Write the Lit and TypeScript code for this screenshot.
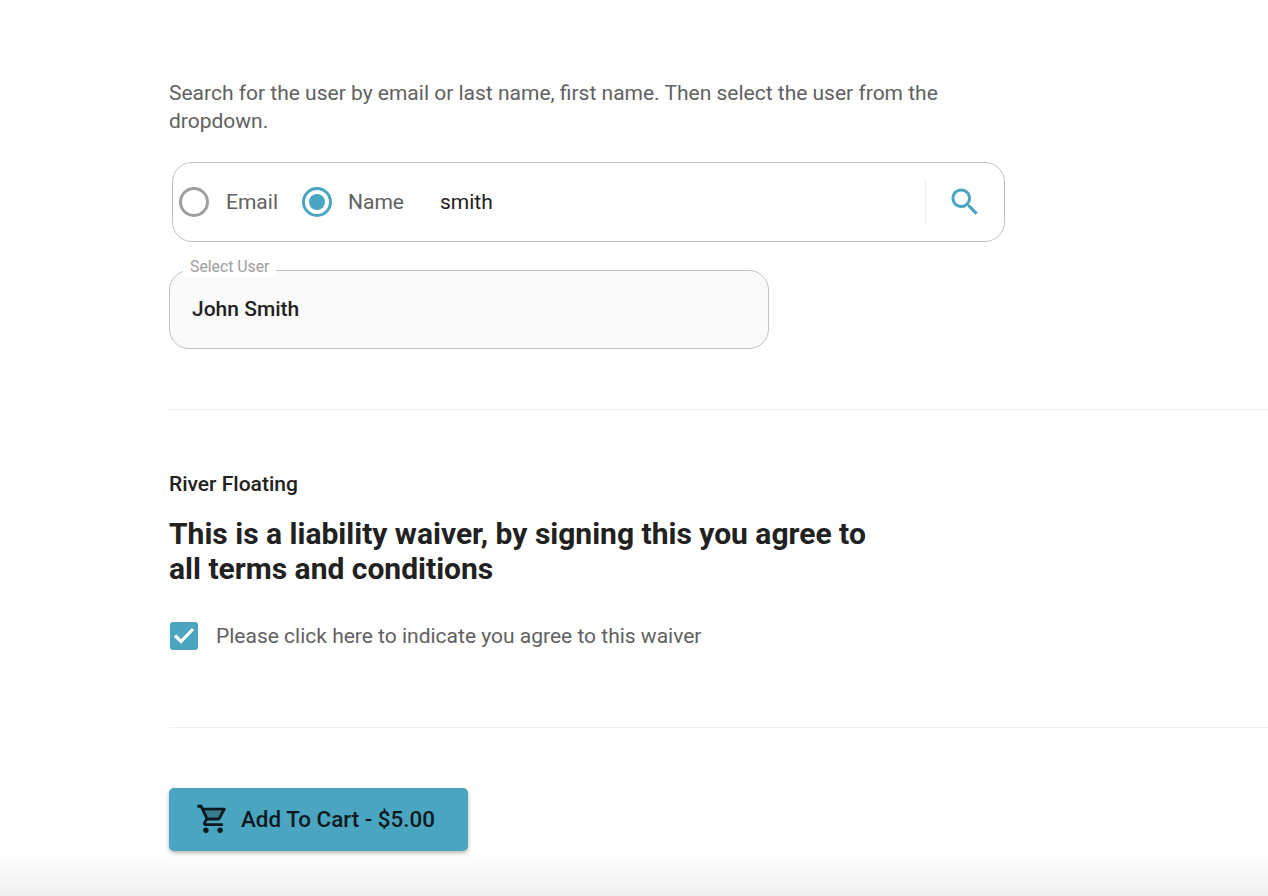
import { LitElement, html, css } from "lit";
import { customElement } from "lit/decorators.js";

@customElement("app-root")
export class AppRoot extends LitElement {
  static styles = css`
    :host {
      display: block;
      position: relative;
      height: 896px;
      overflow: hidden;
      background: #fff;
      font-family: Roboto, "Liberation Sans", sans-serif;
      color: #212121;
    }
    .page {
      display: flex;
      flex-direction: column;
      padding: 79px 0 0 169px;
      box-sizing: border-box;
    }
    .intro {
      margin: 0;
      width: 800px;
      font-size: 21px;
      line-height: 28px;
      color: #616161;
    }
    .search {
      display: flex;
      align-items: center;
      box-sizing: border-box;
      width: 833px;
      height: 80px;
      margin: 27px 0 0 3px;
      padding: 0 6px;
      border: 1px solid #c2c2c2;
      border-radius: 20px;
    }
    .radio {
      box-sizing: border-box;
      flex: none;
      width: 30px;
      height: 30px;
      border-radius: 50%;
      border: 3px solid #9e9e9e;
      display: flex;
      align-items: center;
      justify-content: center;
    }
    .radio.on {
      border-color: #4aa5c1;
    }
    .radio.on::after {
      content: "";
      width: 16px;
      height: 16px;
      border-radius: 50%;
      background: #4aa5c1;
    }
    .opt {
      font-size: 21px;
      color: #616161;
      margin-left: 16px;
    }
    .opt.first {
      margin-left: 17px;
      margin-right: 24px;
    }
    .query {
      flex: 1;
      margin-left: 36px;
      font-size: 21px;
      color: #212121;
    }
    .divider {
      width: 1px;
      height: 44px;
      background: #eeeeee;
    }
    .search-btn {
      display: flex;
      box-sizing: border-box;
      width: 72px;
      padding-left: 21px;
    }
    .search-btn svg {
      width: 36px;
      height: 36px;
      fill: #4aa5c1;
    }
    .select {
      position: relative;
      box-sizing: border-box;
      width: 600px;
      height: 79px;
      margin-top: 28px;
      padding: 0 0 2px 22px;
      display: flex;
      align-items: center;
      border: 1px solid #c2c2c2;
      border-radius: 20px;
      background: #fafafa;
      font-size: 21px;
      font-weight: 500;
      color: #212121;
    }
    .legend {
      position: absolute;
      left: 13px;
      top: -14px;
      padding: 0 7px;
      height: 20px;
      line-height: 20px;
      background: #fff;
      font-size: 15.8px;
      font-weight: 400;
      color: #9e9e9e;
    }
    .rule {
      height: 1px;
      background: #eeeeee;
    }
    .rule.a {
      margin-top: 60px;
    }
    .rule.b {
      margin-top: 77px;
    }
    .kicker {
      margin: 60px 0 0;
      font-size: 21px;
      line-height: 28px;
      font-weight: 500;
      color: #212121;
    }
    .title {
      margin: 18px 0 0;
      width: 720px;
      font-size: 30px;
      line-height: 35px;
      font-weight: 700;
      color: #212121;
    }
    .agree {
      display: flex;
      align-items: center;
      margin-top: 36px;
      font-size: 21px;
      color: #616161;
    }
    .box {
      box-sizing: border-box;
      flex: none;
      width: 28px;
      height: 28px;
      margin: 0 18px 0 1px;
      border-radius: 3px;
      background: #4aa5c1;
      display: flex;
      align-items: center;
      justify-content: center;
    }
    .box svg {
      width: 28px;
      height: 28px;
    }
    .cart {
      display: flex;
      align-items: center;
      box-sizing: border-box;
      width: 299px;
      height: 63px;
      margin-top: 60px;
      padding: 0 0 2px 27px;
      border-radius: 5px;
      background: #4aa5c1;
      box-shadow: 0 2px 4px rgba(0, 0, 0, 0.3);
      font-size: 22.4px;
      font-weight: 500;
      color: #0c1a20;
    }
    .cart svg {
      width: 34px;
      height: 34px;
      margin-right: 11px;
      fill: #0c1a20;
    }
    .fade {
      position: absolute;
      left: 0;
      right: 0;
      bottom: 0;
      height: 44px;
      background: linear-gradient(to bottom, rgba(240, 240, 240, 0), #f0f0f0);
      pointer-events: none;
    }
  `;

  render() {
    return html`
      <div class="page">
        <p class="intro">
          Search for the user by email or last name, first name. Then select the user from the dropdown.
        </p>
        <div class="search">
          <span class="radio"></span>
          <span class="opt first">Email</span>
          <span class="radio on"></span>
          <span class="opt">Name</span>
          <span class="query">smith</span>
          <span class="divider"></span>
          <span class="search-btn">
            <svg viewBox="0 0 24 24">
              <path
                d="M15.5 14h-.79l-.28-.27C15.41 12.59 16 11.11 16 9.5 16 5.91 13.09 3 9.5 3S3 5.91 3 9.5 5.91 16 9.5 16c1.61 0 3.09-.59 4.23-1.57l.27.28v.79l5 4.99L20.49 19l-4.99-5zm-6 0C7.01 14 5 11.99 5 9.5S7.01 5 9.5 5 14 7.01 14 9.5 11.99 14 9.5 14z"
              />
            </svg>
          </span>
        </div>
        <div class="select">
          <span class="legend">Select User</span>
          John Smith
        </div>
        <div class="rule a"></div>
        <p class="kicker">River Floating</p>
        <h1 class="title">This is a liability waiver, by signing this you agree to all terms and conditions</h1>
        <div class="agree">
          <span class="box">
            <svg viewBox="0 0 28 28">
              <path d="M5 13.5l6 6L23 7" fill="none" stroke="#fff" stroke-width="3.2" />
            </svg>
          </span>
          Please click here to indicate you agree to this waiver
        </div>
        <div class="rule b"></div>
        <div class="cart">
          <svg viewBox="0 0 24 24">
            <path opacity=".3" d="M15.55 11l2.76-5H6.16l2.37 5z" />
            <path
              d="M15.55 13c.75 0 1.41-.41 1.75-1.03l3.58-6.49c.37-.66-.11-1.48-.87-1.48H5.21l-.94-2H1v2h2l3.6 7.59-1.35 2.44C4.52 15.37 5.48 17 7 17h12v-2H7l1.1-2h7.45zM6.16 6h12.15l-2.76 5H8.53L6.16 6zM7 18c-1.1 0-1.99.9-1.99 2S5.9 22 7 22s2-.9 2-2-.9-2-2-2zm10 0c-1.1 0-1.99.9-1.99 2s.89 2 1.99 2 2-.9 2-2-.9-2-2-2z"
            />
          </svg>
          Add To Cart - $5.00
        </div>
      </div>
      <div class="fade"></div>
    `;
  }
}
